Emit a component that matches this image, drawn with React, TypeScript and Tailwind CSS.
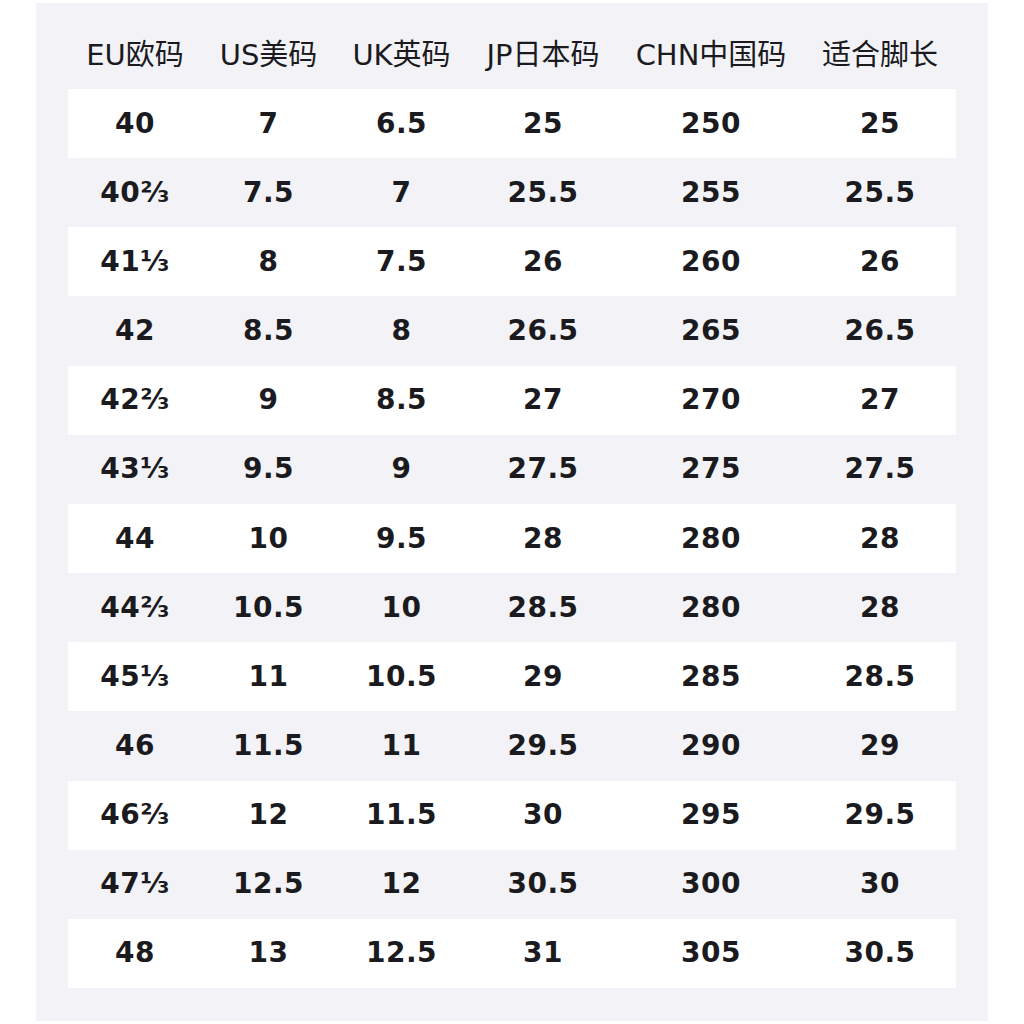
import React from 'react';

const cols = [
  { title: 'EU欧码', w: 'w-[134px]' },
  { title: 'US美码', w: 'w-[133px]' },
  { title: 'UK英码', w: 'w-[133px]' },
  { title: 'JP日本码', w: 'w-[150px]' },
  { title: 'CHN中国码', w: 'w-[186px]' },
  { title: '适合脚长', w: 'w-[152px]' },
];

const rows = [
  ['40', '7', '6.5', '25', '250', '25'],
  ['40⅔', '7.5', '7', '25.5', '255', '25.5'],
  ['41⅓', '8', '7.5', '26', '260', '26'],
  ['42', '8.5', '8', '26.5', '265', '26.5'],
  ['42⅔', '9', '8.5', '27', '270', '27'],
  ['43⅓', '9.5', '9', '27.5', '275', '27.5'],
  ['44', '10', '9.5', '28', '280', '28'],
  ['44⅔', '10.5', '10', '28.5', '280', '28'],
  ['45⅓', '11', '10.5', '29', '285', '28.5'],
  ['46', '11.5', '11', '29.5', '290', '29'],
  ['46⅔', '12', '11.5', '30', '295', '29.5'],
  ['47⅓', '12.5', '12', '30.5', '300', '30'],
  ['48', '13', '12.5', '31', '305', '30.5'],
];

const App = () => {
  return (
    <div className="w-[1024px] h-[1024px] bg-white pt-[3px] pl-[36px] font-['DejaVu_Sans','Noto_Sans_CJK_SC',sans-serif] text-[#1b1b1f]">
      <div className="w-[952px] h-[1018px] bg-[#f3f3f7] pt-[18px] pl-[32px]">
        <div className="flex h-[68px] items-center text-[29px] leading-none">
          {cols.map((c) => (
            <div key={c.title} className={`${c.w} text-center whitespace-nowrap`}>
              {c.title}
            </div>
          ))}
        </div>
        {rows.map((r, i) => (
          <div
            key={i}
            className={`flex h-[69.17px] w-[888px] items-center text-[28px] font-bold leading-none ${i % 2 === 0 ? 'bg-white' : ''}`}
          >
            {r.map((v, j) => (
              <div key={j} className={`${cols[j].w} text-center tracking-[0.5px]`}>
                {v}
              </div>
            ))}
          </div>
        ))}
      </div>
    </div>
  );
};

export default App;
